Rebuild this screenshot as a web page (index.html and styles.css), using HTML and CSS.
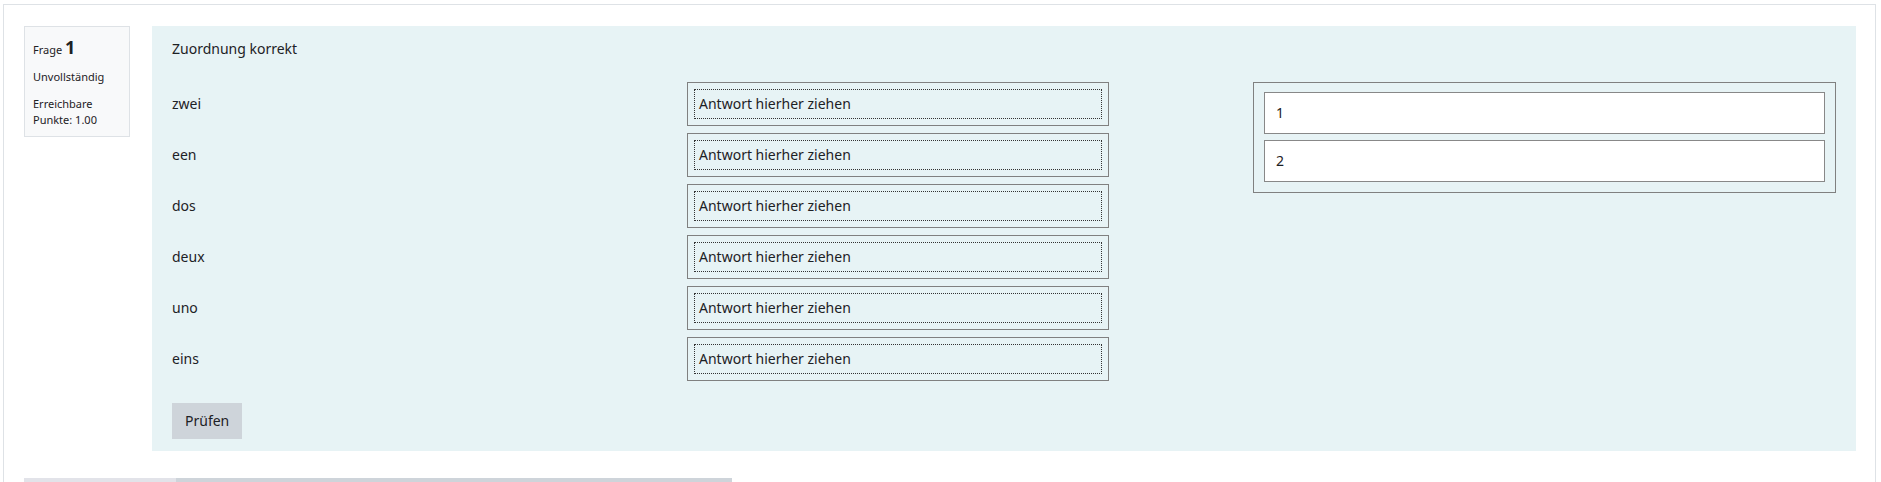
FILE: index.html
```html
<!DOCTYPE html>
<html lang="de">
<head>
  <meta charset="UTF-8">
  <meta name="viewport" content="width=device-width, initial-scale=1.0">
  <title>Frage 1</title>
  <link rel="stylesheet" href="styles.css">
</head>
<body>
  <div class="page">
    <div class="que">
      <div class="info">
        <h3 class="no">Frage <span class="qno">1</span></h3>
        <div class="state">Unvollständig</div>
        <div class="grade">Erreichbare Punkte:&nbsp;1.00</div>
      </div>
      <div class="content">
        <div class="formulation">
          <div class="qtext">Zuordnung korrekt</div>
          <div class="ablock">
            <div class="matches">
              <div class="match">
                <div class="stem">zwei</div>
                <div class="drop"><div class="place">Antwort hierher ziehen</div></div>
              </div>
              <div class="match">
                <div class="stem">een</div>
                <div class="drop"><div class="place">Antwort hierher ziehen</div></div>
              </div>
              <div class="match">
                <div class="stem">dos</div>
                <div class="drop"><div class="place">Antwort hierher ziehen</div></div>
              </div>
              <div class="match">
                <div class="stem">deux</div>
                <div class="drop"><div class="place">Antwort hierher ziehen</div></div>
              </div>
              <div class="match">
                <div class="stem">uno</div>
                <div class="drop"><div class="place">Antwort hierher ziehen</div></div>
              </div>
              <div class="match">
                <div class="stem">eins</div>
                <div class="drop"><div class="place">Antwort hierher ziehen</div></div>
              </div>
            </div>
            <ul class="choices">
              <li>1</li>
              <li>2</li>
            </ul>
          </div>
          <button type="button" class="check">Prüfen</button>
        </div>
      </div>
    </div>
    <div class="navbar">
      <span class="done"></span>
      <span class="rest"></span>
    </div>
  </div>
</body>
</html>
```

FILE: styles.css
```css
/* Basic styling */
body {
  font-family: "Noto Sans", "Open Sans", sans-serif;
  font-size: 14px;
  line-height: 22px;
  color: #1d2125;
  margin: 0;
  padding: 4px 5px 0 3px;
  background: #fff;
}
.page {
  border: 1px solid #dee2e6;
  border-bottom: none;
  padding: 21px 19px 0 20px;
  height: 478px;
  box-sizing: border-box;
}
.que {
  display: flex;
  align-items: flex-start;
}

/* question info box */
.info {
  width: 106px;
  box-sizing: border-box;
  flex-shrink: 0;
  margin-right: 22px;
  padding: 9px 8px 8px;
  background-color: #f8f9fa;
  border: 1px solid #dee2e6;
  font-size: 11px;
  line-height: 16px;
}
.info .no {
  margin: 0 0 8px;
  font-size: 11px;
  font-weight: normal;
  line-height: 22px;
}
.info .qno {
  font-size: 18px;
  font-weight: bold;
}
.info .state {
  margin-bottom: 11px;
}

/* question body */
.content {
  flex: 1;
}
.formulation {
  background-color: #e7f3f5;
  padding: 12px 20px;
}
.qtext {
  margin-bottom: 22px;
}
.ablock {
  display: flex;
  align-items: flex-start;
}
.matches {
  display: flex;
  flex-direction: column;
  gap: 7px;
}
.match {
  display: flex;
  align-items: center;
  height: 44px;
}
.stem {
  width: 515px;
}
.drop {
  width: 422px;
  height: 44px;
  box-sizing: border-box;
  border: 1px solid #808080;
  padding: 6px;
}
.place {
  height: 30px;
  box-sizing: border-box;
  border: 1px dotted #333;
  padding: 0 4px;
  line-height: 28px;
}
.choices {
  flex: 1;
  list-style: none;
  margin: 0 0 0 144px;
  border: 1px solid #808080;
  padding: 9px 10px 10px;
  display: flex;
  flex-direction: column;
  gap: 6px;
}
.choices li {
  height: 42px;
  box-sizing: border-box;
  background-color: #fff;
  border: 1px solid #888;
  padding: 0 11px;
  line-height: 40px;
}
.check {
  display: block;
  margin-top: 22px;
  font-family: inherit;
  font-size: 14px;
  line-height: 22px;
  color: #1d2125;
  background-color: #ced4da;
  border: 1px solid transparent;
  padding: 6px 12px;
  border-radius: 0;
  cursor: pointer;
}

/* page navigation strip */
.navbar {
  display: flex;
  margin-top: 27px;
  width: 708px;
  height: 4px;
}
.navbar .done {
  width: 152px;
  background-color: #e2e3e9;
}
.navbar .rest {
  flex: 1;
  background-color: #ced4da;
}
```
